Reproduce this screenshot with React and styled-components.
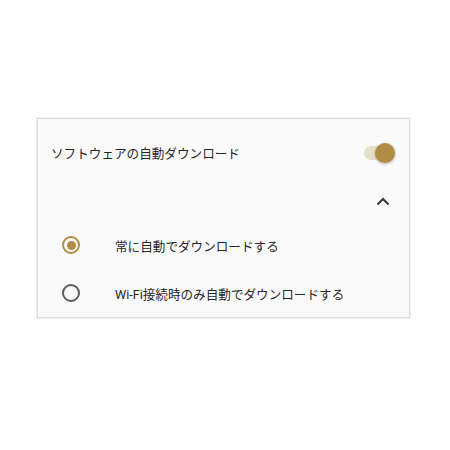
import React from "react";
import styled, { createGlobalStyle } from "styled-components";

const Global = createGlobalStyle`
  html, body { margin: 0; padding: 0; background: #ffffff; }
  body { font-family: Roboto, "Noto Sans CJK JP", sans-serif; }
`;

const Page = styled.div`
  width: 450px;
  height: 450px;
  padding: 118px 0 0 37px;
  box-sizing: border-box;
`;

const Card = styled.section`
  width: 373px;
  box-sizing: border-box;
  background: #fafafa;
  border: 1px solid #dcdcdc;
  box-shadow: 0 0 0 1px #f0f0f0;
`;

const Header = styled.div`
  height: 70px;
  box-sizing: border-box;
  display: flex;
  align-items: center;
  justify-content: space-between;
  padding: 0 14px 3px 13px;
`;

const Title = styled.span`
  font-size: 12.6px;
  color: #262626;
`;

const Switch = styled.div`
  position: relative;
  width: 31px;
  height: 20px;
`;

const Track = styled.div`
  position: absolute;
  left: 0;
  top: 3px;
  width: 28px;
  height: 14px;
  border-radius: 7px;
  background: #e8dfcb;
`;

const Thumb = styled.div`
  position: absolute;
  right: 0;
  top: 0;
  width: 20px;
  height: 20px;
  border-radius: 50%;
  background: #b08c45;
  box-shadow: 0 1px 3px rgba(0, 0, 0, 0.3);
`;

const ChevronRow = styled.div`
  height: 24px;
  display: flex;
  align-items: center;
  justify-content: flex-end;
  padding-right: 19px;
  margin-bottom: 8px;
`;

const Option = styled.label`
  height: 48px;
  display: flex;
  align-items: center;
  padding-left: 24px;
  gap: 35px;
  font-size: 12.6px;
  color: #262626;
`;

const Radio = styled.span`
  width: 18px;
  height: 18px;
  box-sizing: border-box;
  border-radius: 50%;
  border: 2px solid ${(p) => (p.$checked ? "#b08c45" : "#5a5a5a")};
  display: flex;
  align-items: center;
  justify-content: center;
  flex-shrink: 0;
  &::after {
    content: "";
    display: ${(p) => (p.$checked ? "block" : "none")};
    width: 9px;
    height: 9px;
    border-radius: 50%;
    background: #b08c45;
  }
`;

const options = [
  { label: "常に自動でダウンロードする", checked: true },
  { label: "Wi-Fi接続時のみ自動でダウンロードする", checked: false },
];

export default function App() {
  return (
    <>
      <Global />
      <Page>
        <Card>
          <Header>
            <Title>ソフトウェアの自動ダウンロード</Title>
            <Switch>
              <Track />
              <Thumb />
            </Switch>
          </Header>
          <ChevronRow>
            <svg width="14" height="9" viewBox="0 0 14 9">
              <path d="M1.5 7.5 L7 2 L12.5 7.5" fill="none" stroke="#3c3c3c" strokeWidth="2.2" />
            </svg>
          </ChevronRow>
          {options.map((o) => (
            <Option key={o.label}>
              <Radio $checked={o.checked} />
              <span>{o.label}</span>
            </Option>
          ))}
        </Card>
      </Page>
    </>
  );
}
